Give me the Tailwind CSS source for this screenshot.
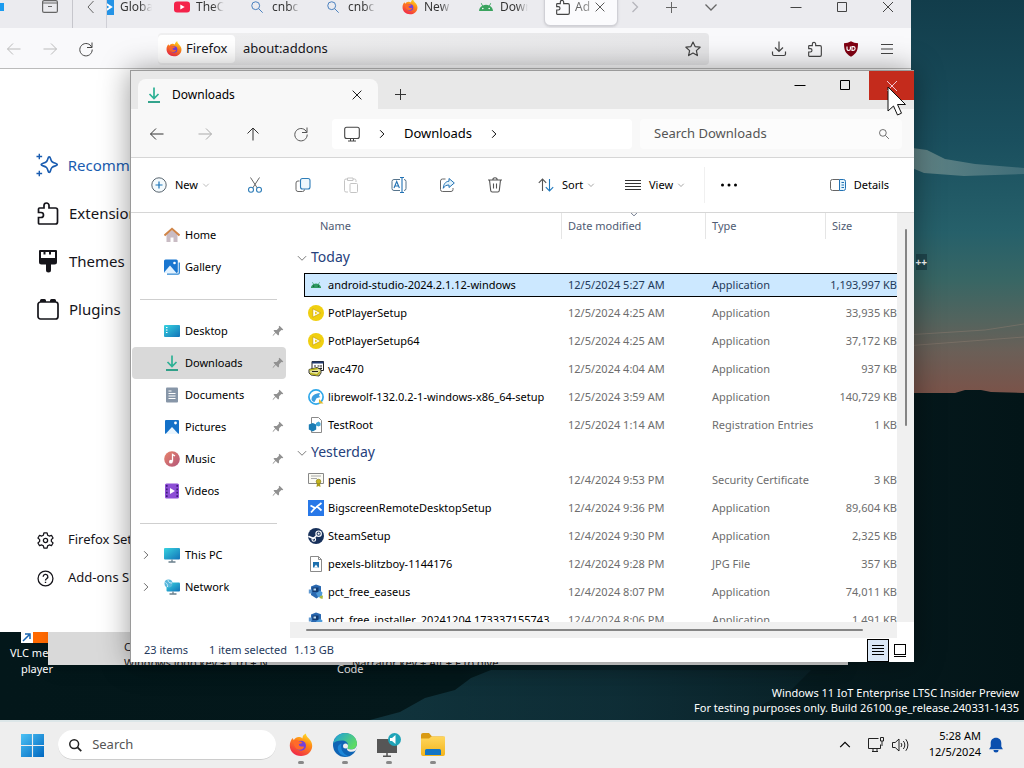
<!DOCTYPE html>
<html lang="en">
<head>
  <meta charset="utf-8">
  <meta name="viewport" content="width=device-width, initial-scale=1">
  <title>Downloads</title>
  <script src="https://cdn.jsdelivr.net/npm/@tailwindcss/browser@4"></script>
</head>
<body class="h-screen flex flex-col overflow-hidden bg-[#03171b] font-['Noto_Sans','Open_Sans',sans-serif] text-[11px] text-black">

  <!-- icon sprite, kept in the page so its gradients resolve -->
  <svg class="absolute w-0 h-0" aria-hidden="true" xmlns="http://www.w3.org/2000/svg">
    <defs>
      <linearGradient id="g-fox" x1="0.8" y1="0" x2="0.3" y2="1"><stop offset="0" stop-color="#ffe226"/><stop offset=".4" stop-color="#ff8a16"/><stop offset="1" stop-color="#f0254b"/></linearGradient>
      <linearGradient id="g-win" x1="0" y1="0" x2="1" y2="1"><stop offset="0" stop-color="#4cc2f5"/><stop offset="1" stop-color="#0067c0"/></linearGradient>
      <linearGradient id="g-teal" x1="0" y1="0" x2="1" y2="1"><stop offset="0" stop-color="#37d3e0"/><stop offset="1" stop-color="#1272b8"/></linearGradient>
      <linearGradient id="g-edge" x1="0" y1="0" x2="1" y2="0.6"><stop offset="0" stop-color="#1b9de2"/><stop offset="1" stop-color="#5fdc62"/></linearGradient>
      <linearGradient id="g-music" x1="0" y1="0" x2="1" y2="1"><stop offset="0" stop-color="#e8836a"/><stop offset="1" stop-color="#b2567a"/></linearGradient>
      <linearGradient id="g-folder" x1="0" y1="0" x2="0" y2="1"><stop offset="0" stop-color="#ffd65c"/><stop offset="1" stop-color="#f3b41c"/></linearGradient>
    </defs>
    <symbol id="left" viewBox="0 0 16 16"><path d="M14.500 8h-13M7 2.500L1.500 8 7 13.500" fill="none" stroke="currentColor"/></symbol>
    <symbol id="right" viewBox="0 0 16 16"><path d="M1.500 8h13M9 2.500L14.500 8 9 13.500" fill="none" stroke="currentColor"/></symbol>
    <symbol id="up" viewBox="0 0 16 16"><path d="M8 14.500V2M2.500 7.500L8 2l5.500 5.500" fill="none" stroke="currentColor"/></symbol>
    <symbol id="reload" viewBox="0 0 16 16"><path d="M13.800 6.500A6.200 6.200 0 1 0 14.200 8.500M14 1.500v5H9" fill="none" stroke="currentColor"/></symbol>
    <symbol id="chev-r" viewBox="0 0 16 16"><path d="M5.500 3l5 5-5 5" fill="none" stroke="currentColor" stroke-width="1.300"/></symbol>
    <symbol id="chev-l" viewBox="0 0 16 16"><path d="M10.500 2l-5.500 6 5.500 6" fill="none" stroke="currentColor"/></symbol>
    <symbol id="chev-d" viewBox="0 0 16 16"><path d="M2.500 5.500L8 11l5.500-5.500" fill="none" stroke="currentColor" stroke-width="1.300"/></symbol>
    <symbol id="chev-u" viewBox="0 0 16 16"><path d="M2.500 10.500L8 5l5.500 5.500" fill="none" stroke="currentColor" stroke-width="1.400"/></symbol>
    <symbol id="close" viewBox="0 0 16 16"><path d="M3 3l10 10M13 3L3 13" fill="none" stroke="currentColor"/></symbol>
    <symbol id="plus" viewBox="0 0 16 16"><path d="M8.500 3v11M3 8.500h11" fill="none" stroke="currentColor"/></symbol>
    <symbol id="min" viewBox="0 0 16 16"><path d="M2.500 8.500h11" fill="none" stroke="currentColor"/></symbol>
    <symbol id="max" viewBox="0 0 16 16"><path d="M3.500 3.500h9v9h-9z" fill="none" stroke="currentColor"/></symbol>
    <symbol id="search" viewBox="0 0 16 16"><circle cx="6.500" cy="6.500" r="4.500" fill="none" stroke="currentColor"/><path d="M10 10l4.500 4.500" stroke="currentColor"/></symbol>
    <symbol id="find" viewBox="0 0 16 16"><circle cx="7" cy="7" r="5" fill="none" stroke="#222" stroke-width="1.700"/><path d="M10.800 10.800l4.200 4.200" stroke="#222" stroke-width="2"/></symbol>
    <symbol id="puzzle" viewBox="0 0 24 24"><path d="M2.500 22V16.500H5a2 2 0 0 0 0-5H2.500V8a1 1 0 0 1 1-1H8V4.500a2.500 2.500 0 0 1 5 0V7h6.500a2 2 0 0 1 2 2v12a2 2 0 0 1-2 2h-16a1 1 0 0 1-1-1z" fill="none" stroke="currentColor" stroke-width="1.700"/></symbol>
    <symbol id="archive" viewBox="0 0 16 16"><rect x=".6" y="1.600" width="14.800" height="11.800" rx="1.500" fill="none" stroke="currentColor" stroke-width="1.200"/><path d="M1 4h14M6 7.500h4" stroke="currentColor" stroke-width="1.200"/></symbol>
    <symbol id="fox" viewBox="0 0 24 24">
      <path d="M12 23C5.500 23 .8 18.500.8 12.500c0-3 1-5.500 3-7.500.2 1 .6 1.700 1 2C6 5 8 4 9.500 4c1.500-.2 3 .4 4 1.400C13.300 3.500 14.500 1.500 17 .5c-.2 2 1 3 2.800 5 2.200 2.300 3.500 4.500 3.400 7.500-.2 6-5 10-11.200 10z" fill="url(#g-fox)"/>
      <circle cx="12" cy="12.800" r="5" fill="#7440d8"/>
      <path d="M4.500 8c2-1.500 4.500-1 5.500.5 1.500-.3 3 .3 3.500 1.500-1.500 0-2 .8-3.500 1-.5 1.500 1 3 3 2.500 1.500-.3 2.200 0 2.200.5-1 2.500-5 4-8 1.500C5 13.500 4.500 10.500 4.500 8z" fill="#ff6a2a"/>
    </symbol>
    <symbol id="yt" viewBox="0 0 16 16"><rect y="2.500" width="16" height="11" rx="3" fill="#f4234a"/><path d="M6.300 5.500l4.400 2.500-4.400 2.500z" fill="#fff"/></symbol>
    <symbol id="android" viewBox="0 0 16 16"><path d="M1 12c.2-2.400 1.500-4.200 3.200-5.200L2.800 4.400l.6-.4 1.500 2.500a7.500 7.500 0 0 1 6.200 0L12.600 4l.6.400-1.400 2.400C13.500 7.800 14.800 9.600 15 12z" fill="#3aa35e"/><circle cx="4.800" cy="9.500" r=".8" fill="#fff"/><circle cx="11.200" cy="9.500" r=".8" fill="#fff"/></symbol>
    <symbol id="android-sm" viewBox="-3 -3 22 22"><path d="M1 12c.2-2.400 1.500-4.200 3.200-5.200L2.800 4.400l.6-.4 1.500 2.500a7.500 7.500 0 0 1 6.200 0L12.600 4l.6.400-1.400 2.400C13.500 7.800 14.800 9.600 15 12z" fill="#2f9a62"/><circle cx="4.800" cy="9.500" r=".8" fill="#0b3a26"/><circle cx="11.200" cy="9.500" r=".8" fill="#0b3a26"/></symbol>
    <symbol id="star" viewBox="0 0 16 16"><path d="M8 1l2.100 4.600 5 .6-3.700 3.400 1 5L8 12.100l-4.400 2.500 1-5L.9 6.200l5-.6z" fill="none" stroke="currentColor" stroke-width="1.200" stroke-linejoin="round"/></symbol>
    <symbol id="save" viewBox="0 0 16 16"><path d="M8 .5v9.500M4 6.500l4 4 4-4M1.500 10.500v2.500a1.500 1.500 0 0 0 1.500 1.500h10a1.500 1.500 0 0 0 1.500-1.500v-2.500" fill="none" stroke="currentColor" stroke-width="1.200"/></symbol>
    <symbol id="shield" viewBox="0 0 16 16"><path d="M8 .3c2 1.300 4.500 1.900 7 1.900 0 6.500-1 10-7 13.500C2 12.200 1 8.700 1 2.200c2.500 0 5-.6 7-1.900z" fill="#800012"/><path d="M4 5.500v2.300a1.500 1.500 0 0 0 3.400 0V5.500M9 5.700v3.600h1.300a1.800 1.800 0 0 0 0-3.600z" fill="none" stroke="#fff" stroke-width="1.200"/></symbol>
    <symbol id="menu" viewBox="0 0 16 16"><path d="M2 3.500h12M2 8h12M2 12.500h12" stroke="currentColor" stroke-width="1.200"/></symbol>
    <symbol id="sparkle" viewBox="0 0 24 24"><path d="M14 3.500c.8 0 1 .4 1.300 1.500.9 3.300 1.600 4.200 5.200 5.200 2.700.8 2.700 1.900 0 2.700-3.600 1-4.300 1.900-5.200 5.200-.6 2.400-2 2.400-2.600 0-.9-3.300-1.600-4.200-5.200-5.200-2.700-.8-2.700-1.900 0-2.700 3.600-1 4.300-1.900 5.200-5.200.3-1.100.5-1.500 1.300-1.500z" fill="none" stroke="currentColor" stroke-width="1.800"/><path d="M3.500 0v6M.5 3h6M3.500 18v6M.5 21h6" stroke="currentColor" stroke-width="1.500"/></symbol>
    <symbol id="brush" viewBox="0 0 24 24"><path d="M4 1h16a1 1 0 0 1 1 1v11a2.500 2.500 0 0 1-2.500 2.500H15V21a2.500 2.500 0 0 1-5 0v-5.500H5.500A2.500 2.500 0 0 1 3 13V2a1 1 0 0 1 1-1z" fill="currentColor"/><path d="M5 3h2.500v2.500H9.500V3h3.500v2.500h2V3h4v6H5z" fill="#fff"/></symbol>
    <symbol id="plugin" viewBox="0 0 24 24"><rect x="2" y="5" width="20" height="17" rx="2.500" fill="none" stroke="currentColor" stroke-width="1.700"/><path d="M4 5V3.500A1.500 1.500 0 0 1 5.500 2h3A1.500 1.500 0 0 1 10 3.500V5zM14 5V3.500A1.500 1.500 0 0 1 15.500 2h3A1.500 1.500 0 0 1 20 3.500V5z" fill="currentColor"/></symbol>
    <symbol id="gear" viewBox="0 0 16 16"><path d="M6.500.8h3l.5 2.200 1.500.8 2.100-.7 1.500 2.600-1.600 1.500v1.600l1.600 1.500-1.500 2.600-2.100-.7-1.500.8-.5 2.200h-3L6 13l-1.500-.8-2.100.7L.9 10.300l1.600-1.500V7.200L.9 5.700l1.500-2.600 2.100.7L6 3z" fill="none" stroke="currentColor" stroke-width="1.200" stroke-linejoin="round"/><circle cx="8" cy="8" r="2" fill="none" stroke="currentColor" stroke-width="1.200"/></symbol>
    <symbol id="help" viewBox="0 0 16 16"><circle cx="8" cy="8" r="7" fill="none" stroke="currentColor" stroke-width="1.200"/><path d="M5.800 6.300a2.200 2.200 0 1 1 3.300 1.900c-.8.500-1.100.8-1.100 1.600M8 11v1.300" fill="none" stroke="currentColor" stroke-width="1.300"/></symbol>
    <symbol id="down" viewBox="0 0 16 16"><path d="M8 .5v11M3.500 7L8 11.500 12.500 7" fill="none" stroke="#2db195" stroke-width="1.700"/><path d="M2 15h12" stroke="#1d9a80" stroke-width="1.800"/></symbol>
    <symbol id="monitor" viewBox="0 0 16 16"><rect x=".7" y="1.200" width="14.600" height="11.300" rx="2" fill="none" stroke="currentColor" stroke-width="1.100"/><path d="M4 15h8M6.500 12.500V15M9.500 12.500V15" stroke="currentColor"/></symbol>
    <symbol id="new" viewBox="0 0 16 16"><circle cx="8" cy="8" r="7.200" fill="#f4fafd" stroke="#5a6670"/><path d="M8 4.500v7M4.500 8h7" stroke="#1b74b8" stroke-width="1.200"/></symbol>
    <symbol id="cut" viewBox="0 0 16 16"><path d="M3.500.5l6.800 10.500M12.500.5L5.700 11" stroke="#666" fill="none"/><circle cx="4" cy="12.800" r="2.500" fill="none" stroke="#2e7db8" stroke-width="1.100"/><circle cx="12" cy="12.800" r="2.500" fill="none" stroke="#2e7db8" stroke-width="1.100"/></symbol>
    <symbol id="copy" viewBox="0 0 16 16"><path d="M4.500 4H3a2 2 0 0 0-2 2v6.500a2 2 0 0 0 2 2h4.500a2 2 0 0 0 2-2" fill="none" stroke="#666"/><rect x="5.500" y="1.500" width="9.500" height="10.500" rx="2" fill="#eef8fd" stroke="#2e7db8" stroke-width="1.100"/></symbol>
    <symbol id="paste" viewBox="0 0 16 16"><path d="M5 15H3a1.500 1.500 0 0 1-1.500-1.500v-10A1.500 1.500 0 0 1 3 2h1.500M10 2h1.500A1.500 1.500 0 0 1 13 3.500V5M4.500 1h5.500v2.500H4.500z" fill="none" stroke="#c4c4c4"/><rect x="7" y="6.500" width="7.500" height="9" rx="1" fill="none" stroke="#c4c4c4"/></symbol>
    <symbol id="rename" viewBox="0 0 16 16"><path d="M9 2.500H3a2 2 0 0 0-2 2v7a2 2 0 0 0 2 2h6M13 2.500a2 2 0 0 1 2 2v7a2 2 0 0 1-2 2" fill="none" stroke="#56748c"/><path d="M9 .5h4M11 .5v15M9 15.500h4M3 11l2.700-6.500L8.400 11M4 9h3.500" fill="none" stroke="#2272b4" stroke-width="1.100"/></symbol>
    <symbol id="share" viewBox="0 0 16 16"><path d="M6.500 2H3.500a2 2 0 0 0-2 2v8.500a2 2 0 0 0 2 2H12a2 2 0 0 0 2-2V11" fill="none" stroke="#666"/><path d="M10 1.500L15.300 6 10 10.500V8C7 8 5.500 9.200 4.300 11.300 4.500 7.500 6.200 4.500 10 4.200z" fill="#e4f3fb" stroke="#2272b4" stroke-linejoin="round"/></symbol>
    <symbol id="trash" viewBox="0 0 16 16"><path d="M1 3h14M5.800 3a2.200 2.200 0 0 1 4.400 0M2.500 3l1.200 10.500A1.700 1.700 0 0 0 5.300 15h5.400a1.700 1.700 0 0 0 1.600-1.500L13.500 3M6.500 6.500v5M9.500 6.500v5" fill="none" stroke="#555" stroke-width="1.100"/></symbol>
    <symbol id="sort" viewBox="0 0 16 16"><path d="M4.500 14V2M.8 5.800L4.500 2l3.700 3.800" fill="none" stroke="#555" stroke-width="1.100"/><path d="M11.500 2v12M7.800 10.200l3.700 3.800 3.700-3.800" fill="none" stroke="#1e78bd" stroke-width="1.100"/></symbol>
    <symbol id="lines" viewBox="0 0 16 16"><path d="M0 3.500h16M0 6.500h16M0 9.500h16M0 12.500h16" stroke="#333"/></symbol>
    <symbol id="list" viewBox="0 0 12 12"><path d="M0 1.500h12M0 4.500h12M0 7.500h12M0 10.500h12" stroke="#000"/></symbol>
    <symbol id="dots" viewBox="0 0 16 16"><circle cx="1.500" cy="8" r="1.500"/><circle cx="8" cy="8" r="1.500"/><circle cx="14.500" cy="8" r="1.500"/></symbol>
    <symbol id="details" viewBox="0 0 16 16"><path d="M9.500 2.500H2.500a2 2 0 0 0-2 2v7a2 2 0 0 0 2 2h7" fill="none" stroke="#666"/><path d="M9.500 2.500h4a2 2 0 0 1 2 2v7a2 2 0 0 1-2 2h-4zM11.500 5.500h2.500M11.500 8h2.500M11.500 10.500h2.500" fill="#e5f4fc" stroke="#2272b4"/></symbol>
    <symbol id="home" viewBox="0 0 16 16"><path d="M2.500 7.500L8 3l5.500 4.500V15h-4v-4.500h-3V15h-4z" fill="#c9bcc4"/><path d="M.5 8.500L8 1.800l7.500 6.700" fill="none" stroke="#d08548" stroke-width="2"/></symbol>
    <symbol id="gallery" viewBox="0 0 16 16"><path d="M3 15.200h11A1.300 1.300 0 0 0 15.300 14V3.500" fill="none" stroke="#2c86d4" stroke-width="1.300"/><rect x="0" y=".5" width="13.800" height="13.500" rx="1.500" fill="#1976d0"/><path d="M0 13.500L6 6.500l6.500 7.500H1z" fill="#e4f3ff"/><circle cx="10.500" cy="4" r="1.300" fill="#fff"/></symbol>
    <symbol id="desktop" viewBox="0 0 16 16"><rect y="2" width="16" height="12" rx="1" fill="url(#g-teal)"/><path d="M2 4.500h1.500M2 7h1.500M2 9.500h1.500" stroke="#fff"/></symbol>
    <symbol id="docs" viewBox="0 0 16 16"><rect x="2" y=".5" width="12" height="15" rx="1" fill="#8796a8"/><path d="M4.500 4h3M4.500 6.500h7M4.500 9h7M4.500 11.500h7" stroke="#fff"/></symbol>
    <symbol id="pics" viewBox="0 0 16 16"><rect x="1" y="1" width="14" height="14" rx="1" fill="#1370c8"/><path d="M1.500 15L8 8l6.500 7z" fill="#eaf6ff"/><circle cx="11.500" cy="4" r="1.400" fill="#fff"/></symbol>
    <symbol id="music" viewBox="0 0 16 16"><circle cx="8" cy="8" r="7.800" fill="url(#g-music)"/><path d="M8.500 10.500V3.500l2.500 1.500" fill="none" stroke="#fff" stroke-width="1.300"/><circle cx="6.900" cy="10.700" r="1.900" fill="#fff"/></symbol>
    <symbol id="videos" viewBox="0 0 16 16"><rect x="1" y=".5" width="14" height="15" rx="1.500" fill="#8d4fd6"/><path d="M2.800 2v12M13.200 2v12" stroke="#3d1c78" stroke-width="1.600" stroke-dasharray="1.800 1.600"/><path d="M6 5l5 3-5 3z" fill="#fff"/></symbol>
    <symbol id="pc" viewBox="0 0 16 16"><rect y="1" width="16" height="11.500" rx="1" fill="url(#g-teal)"/><path d="M8 12.500v2M4.500 15h7" stroke="#6a7f8c" stroke-width="1.300"/></symbol>
    <symbol id="network" viewBox="0 0 16 16"><rect x="2.500" y="3.500" width="13.500" height="9" rx="1" fill="url(#g-teal)"/><circle cx="4.500" cy="4.500" r="4" fill="#58b7dc"/><path d="M1.500 3.500c1.500 1 2.500 2.500 2 4.500M4 1c0 2 1.500 3 4 3" fill="none" stroke="#cdeefa"/><path d="M9 12.500v2M5.500 15h7" stroke="#6a7f8c" stroke-width="1.300"/></symbol>
    <symbol id="pin" viewBox="0 0 16 16"><path d="M10 1l5 5-1 1-1.500-.3L9.500 9.700 9.300 13l-1.100 1L5 10.800 1 15l.2-1.700L4.300 10 2 7.800l1-1.100 3.300-.2L9.300 3.500 9 2z" fill="#919191"/></symbol>
    <symbol id="pot" viewBox="0 0 16 16"><circle cx="8" cy="8" r="8" fill="#f0cf10"/><path d="M4.800 3.800l8 4.200-8 4.200z" fill="#fff" stroke="#c79c05" stroke-width=".7"/><path d="M7 6.500l2.800 1.500L7 9.500z" fill="#f0cf10"/></symbol>
    <symbol id="vac" viewBox="0 0 16 16"><path d="M4 .5h11.500v9H4z" fill="#fff" stroke="#222"/><path d="M4 1.500h11.500" stroke="#223a70" stroke-width="2"/><path d="M6 5h2M9.500 5h2M13 4v2.500M6 7.500h8" stroke="#222"/><path d="M1 8.500l8-2 4 2v3.500l-2 3-8-1-2-2z" fill="#e2e096" stroke="#222" stroke-width=".9"/><path d="M1.500 9l8-1.500M2 12.500l7 1.500 3-3" stroke="#b8b21c" stroke-width="1.500" fill="none"/><path d="M4 10.500h6" stroke="#222"/></symbol>
    <symbol id="wolf" viewBox="0 0 16 16"><circle cx="8" cy="8" r="7.100" fill="#fff" stroke="#2fa8ea" stroke-width="1.700"/><path d="M3.500 10.500c.3-4 3-6 8.500-6.500l-1 3 1.500 1-4 1.200L6.500 13c-1.500-.3-2.500-1-3-2.500z" fill="#3c9ee0"/><path d="M11 10l4.500 4.500H11z" fill="#e0b92c"/></symbol>
    <symbol id="reg" viewBox="0 0 16 16"><path d="M3.500.5h7l3 3v12h-10z" fill="#fff" stroke="#8a8a8a"/><path d="M.8 7.500l4-1.500 3.400 1.500v5L4.700 14.500.8 12.500z" fill="#1b7cb4"/><path d="M8 6l2.500-1.500 2 1.500v2.500l-2 1L8 8.500z" fill="#3fa4d4"/></symbol>
    <symbol id="cert" viewBox="0 0 16 16"><path d="M.5 1.500h15v10H.5z" fill="#fbfbf4" stroke="#888"/><path d="M3 4h10M3 6.500h6" stroke="#aaa"/><circle cx="10.500" cy="9.500" r="2.300" fill="#c4b41c" stroke="#7c7310" stroke-width=".6"/><path d="M9 11.500l-.5 3.500 2-1 2 1-.5-3.500z" fill="#a89a14"/></symbol>
    <symbol id="bigscreen" viewBox="0 0 16 16"><path d="M0 0h16v16H0z" fill="#2878e8"/><path d="M2.500 5.500l4.500 2.500-4 4.500M13.500 3L9 6.500l4.500 4" fill="none" stroke="#fff" stroke-width="1.800"/><path d="M6.500 8.500L9.500 6.500" stroke="#fff" stroke-width="1.500"/></symbol>
    <symbol id="steam" viewBox="0 0 16 16"><circle cx="8" cy="8" r="8" fill="#17305a"/><circle cx="10.600" cy="5.700" r="2.700" fill="none" stroke="#fff" stroke-width="1.200"/><circle cx="10.600" cy="5.700" r="1.100" fill="#fff"/><path d="M.3 8.200l5.200 2.300 3-3" fill="none" stroke="#fff" stroke-width="1.500"/><circle cx="5.800" cy="11.500" r="1.800" fill="none" stroke="#fff" stroke-width="1.100"/></symbol>
    <symbol id="jpg" viewBox="0 0 16 16"><path d="M2.500.5h8l3 3v12h-11z" fill="#fff" stroke="#8a8a8a"/><path d="M10.500.5v3h3" fill="none" stroke="#8a8a8a"/><path d="M5 6h6v5.500H5z" fill="#1b6fae"/><path d="M6 11.500l2-3 2 3z" fill="#fff"/></symbol>
    <symbol id="pct" viewBox="0 0 16 16"><path d="M3 2.500L8 .5l5 1.700v9L8.500 14.500 3 11z" fill="#2a68b0"/><path d="M4.500 3.500h6v4.500h-6z" fill="#123a70"/><path d="M5.500 4.500H8v2H5.500z" fill="#bcdcf4"/><path d="M.8 5.500h3v4h-3z" fill="#5f98d0"/><path d="M8 9.500l4-3 2.500 2-1 5-3.500-.5z" fill="#4d9ad8"/><path d="M12 12l3-.5-.5 3.500-3-1z" fill="#a9b840"/></symbol>
    <symbol id="start" viewBox="0 0 24 24"><path d="M0 0h11.400v11.400H0zM12.600 0H24v11.400H12.600zM0 12.600h11.400V24H0zM12.600 12.600H24V24H12.600z" fill="url(#g-win)"/></symbol>
    <symbol id="edge" viewBox="0 0 24 24"><circle cx="12" cy="12" r="12" fill="#0f64b4"/><path d="M.3 10.500C1.500 4 6.500 0 12 0c6.800 0 12 4.800 12 10.500 0 3.500-2.800 6-6 6-2.500 0-4-1-4-1.800 0-.6 1-1 1-2.700 0-2.500-2.500-4.500-6-4.500-4 0-7.500 1-8.700 3z" fill="url(#g-edge)"/><path d="M14 14.500c-.8 2 1 4.300 4.500 4.300 1.500 0 3-.4 4.200-1.200l1.300-2.600V12c-.8 3-3.200 4.500-6 4.500-2.500 0-4-1-4-2z" fill="#eee"/><path d="M8.500 10.500c-1.500 5 1.500 10.500 6.500 12.500-5 1-10-2.500-10.300-8 0-2 1.500-4 3.800-4.500z" fill="#1b86d8"/><circle cx="12.500" cy="13" r="2.500" fill="#eee"/></symbol>
    <symbol id="speaker-pc" viewBox="0 0 24 24"><path d="M0 6h20v14H0z" fill="#565656"/><path d="M10 20v3M6 23.300h8" stroke="#565656" stroke-width="1.500"/><circle cx="17.500" cy="6.500" r="6.500" fill="#20a4b8"/><path d="M13 5h2l3.500-3v9L15 8h-2z" fill="#fff"/></symbol>
    <symbol id="folder" viewBox="0 0 24 24"><path d="M0 2a2 2 0 0 1 2-2h6l3 3.500h11a2 2 0 0 1 2 2V8H0z" fill="#d99a14"/><path d="M0 5.500h8l2.500-2H24V21a2 2 0 0 1-2 2H2a2 2 0 0 1-2-2z" fill="url(#g-folder)"/><path d="M5.500 16h13a1.500 1.500 0 0 1 1.500 1.500V22H4v-4.500A1.500 1.500 0 0 1 5.500 16z" fill="#1475c4"/></symbol>
    <symbol id="net" viewBox="0 0 16 16"><path d="M10.500 1.500h-10v10h12V7.500M4 14.500h6M5 11.500v3M9 11.500v3M12.500.5h3v3.500h-3zM14 4v5" fill="none" stroke="#222"/></symbol>
    <symbol id="sound" viewBox="0 0 18 16"><path d="M.5 5.500h2.700L7 2v12l-3.800-3.500H.5zM9 6a3 3 0 0 1 0 4M11.300 4a6 6 0 0 1 0 8M13.800 2.200a9 9 0 0 1 0 11.600" fill="none" stroke="#222"/></symbol>
    <symbol id="bell" viewBox="0 0 16 16"><path d="M8 .8c3.300 0 5.300 2.400 5.300 5.300v3.400l1.600 2.700H1.100l1.600-2.700V6.100C2.700 3.200 4.700.8 8 .8zM5.500 13h5a2.500 2.500 0 0 1-5 0z" fill="#0b4fae"/></symbol>
  </svg>

  <main class="relative flex-1 overflow-hidden">
    <!-- wallpaper -->
    <svg class="absolute inset-0 w-full h-full" viewBox="0 0 1024 720" preserveAspectRatio="none">
      <defs>
        <linearGradient id="sky" gradientUnits="userSpaceOnUse" x1="0" y1="0" x2="0" y2="400">
          <stop offset="0" stop-color="#123d4b"/><stop offset=".35" stop-color="#1a4f5e"/><stop offset=".58" stop-color="#26606a"/>
          <stop offset=".7" stop-color="#386664"/><stop offset=".8" stop-color="#53645e"/><stop offset=".88" stop-color="#6b5f57"/><stop offset="1" stop-color="#7d5147"/>
        </linearGradient>
        <linearGradient id="cloud" x1="0" y1="0" x2="1" y2="0"><stop offset="0" stop-color="#7b9693"/><stop offset="1" stop-color="#4c7680"/></linearGradient>
        <linearGradient id="lake" x1="0" y1="0" x2="1" y2="0"><stop offset="0" stop-color="#03171a"/><stop offset=".45" stop-color="#04181b"/><stop offset=".6" stop-color="#0b252c"/><stop offset=".8" stop-color="#061a1e"/><stop offset="1" stop-color="#031518"/></linearGradient>
        <linearGradient id="ripple" x1="0" y1="0" x2="1" y2="0"><stop offset="0" stop-color="#16404c"/><stop offset="1" stop-color="#0b252c"/></linearGradient>
      </defs>
      <path d="M0 0h1024v395H0z" fill="url(#sky)"/>
      <path d="M905 147l22 3 18 9 30 5 49 4v6l-60 2-40-3-19-8z" fill="url(#cloud)" opacity=".75"/>
      <path d="M905 335l80-5 39-6M905 346l119-9" fill="none" stroke="#8c7c70" opacity=".5"/>
      <path d="M0 393h900l55 0 10-3 16 0 10 2 33 1v328H0z" fill="url(#lake)"/>
      <path d="M370 720l30-8 25-14 30-8 16-12 20-8h320l-20 20-30 15-10 15z" fill="url(#ripple)" opacity=".7"/>
    </svg>
    <span class="absolute right-[97px] top-[254px] text-[10px] font-bold text-white bg-[#16343c]/60 leading-4">++</span>

    <!-- desktop shortcuts -->
    <div class="absolute left-[7px] bottom-[43px] w-[60px] flex flex-col items-center text-[11px] leading-4 text-white text-center">
      <div class="flex items-end w-8 h-6 mb-0.5 bg-orange-500"><svg class="w-3 h-3 bg-white" viewBox="0 0 12 12"><path d="M2 10l6-6M4 3h5v5" fill="none" stroke="#1763b0" stroke-width="1.500"/></svg></div>
      VLC media player
    </div>
    <span class="absolute left-[337px] bottom-[43px] leading-4 text-white">Code</span>

    <!-- window at the back -->
    <div class="absolute left-[48px] right-[176px] bottom-[55px] h-20 overflow-hidden bg-[#d9d9d9] shadow-lg flex items-end pl-[76px] text-[#222]">
      <span class="w-[228px] -mb-1.5 leading-4 whitespace-nowrap">Ctrl<br>Windows logo key + Ctrl + N</span>
      <span class="-mb-1.5 leading-4">Narrator key + Alt + F to give</span>
    </div>

    <!-- Firefox -->
    <section class="absolute left-0 top-0 right-[113px] bottom-[88px] flex flex-col bg-white overflow-hidden text-[#15141a]">
      <div class="flex items-center h-7 pb-3.5 bg-[#ebebef] text-[12px] text-[#444] shrink-0">
        <span class="w-1 h-2 bg-[#1b9bef]"></span>
        <svg class="w-4 h-4 ml-[38px] text-[#666]"><use href="#archive"/></svg>
        <span class="w-px h-7 ml-3.5 mt-3.5 bg-[#c6c6cc]"></span>
        <svg class="w-4 h-4 ml-[10px] mr-[7px] text-[#666]"><use href="#chev-l"/></svg>
        <div class="flex justify-end w-[438px] h-7 mt-3.5 pb-3.5 items-center border-l border-[#cfcfd6] overflow-hidden">
          <a href="#" class="flex items-center gap-1.5 w-[76px] h-7 shrink-0 pl-0.5 overflow-hidden"><svg class="w-4 h-4 shrink-0" viewBox="0 0 16 16"><path d="M0 0h16v16H0z" fill="#2493e6"/><path d="M7 4l6 4-6 4" fill="none" stroke="#fff" stroke-width="2"/></svg><span class="w-8 overflow-hidden whitespace-nowrap bg-linear-to-r from-[#333] from-60% to-transparent bg-clip-text text-transparent">Global</span></a>
          <a href="#" class="flex items-center gap-1.5 w-[76px] h-7 shrink-0 pl-0.5 overflow-hidden"><svg class="w-4 h-4 shrink-0"><use href="#yt"/></svg><span class="w-7 overflow-hidden whitespace-nowrap bg-linear-to-r from-[#333] from-60% to-transparent bg-clip-text text-transparent">TheC</span></a>
          <a href="#" class="flex items-center gap-1.5 w-[76px] h-7 shrink-0 pl-0.5 overflow-hidden"><svg class="w-3.5 h-3.5 mr-0.5 shrink-0 text-[#3572b8]"><use href="#search"/></svg><span class="w-7 overflow-hidden whitespace-nowrap bg-linear-to-r from-[#333] from-60% to-transparent bg-clip-text text-transparent">cnbc</span></a>
          <a href="#" class="flex items-center gap-1.5 w-[76px] h-7 shrink-0 pl-0.5 overflow-hidden"><svg class="w-3.5 h-3.5 mr-0.5 shrink-0 text-[#3572b8]"><use href="#search"/></svg><span class="w-7 overflow-hidden whitespace-nowrap bg-linear-to-r from-[#333] from-60% to-transparent bg-clip-text text-transparent">cnbc</span></a>
          <a href="#" class="flex items-center gap-1.5 w-[76px] h-7 shrink-0 pl-0.5 overflow-hidden"><svg class="w-4 h-4 shrink-0"><use href="#fox"/></svg><span class="w-7 overflow-hidden whitespace-nowrap bg-linear-to-r from-[#333] from-60% to-transparent bg-clip-text text-transparent">New</span></a>
          <a href="#" class="flex items-center gap-1.5 w-[68px] h-7 shrink-0 pl-0.5 overflow-hidden"><svg class="w-4 h-4 shrink-0"><use href="#android"/></svg><span class="w-7 overflow-hidden whitespace-nowrap bg-linear-to-r from-[#333] from-60% to-transparent bg-clip-text text-transparent">Down</span></a>
        </div>
        <a href="#" class="flex items-center w-[74px] h-9 pl-2.5 pb-0.5 mt-0.5 shrink-0 rounded-md bg-[#fbfbfd] border border-[#d0d0d6] shadow">
          <svg class="w-4 h-4"><use href="#puzzle"/></svg><span class="ml-1 w-4 overflow-hidden bg-linear-to-r from-[#555] to-[#aaa] bg-clip-text text-transparent">Ad</span><svg class="w-3.5 h-3.5 ml-0.5"><use href="#close"/></svg>
        </a>
        <svg class="w-4 h-4 ml-[9px] text-[#b5b5bb]"><use href="#chev-r"/></svg>
        <button class="ml-5" aria-label="New tab"><svg class="w-4 h-4 text-[#666]"><use href="#plus"/></svg></button>
        <button class="ml-6" aria-label="List all tabs"><svg class="w-4 h-4 text-[#666]"><use href="#chev-d"/></svg></button>
        <button class="ml-auto" aria-label="Minimize"><svg class="w-4 h-4"><use href="#min"/></svg></button>
        <button class="ml-[30px]" aria-label="Maximize"><svg class="w-4 h-4"><use href="#max"/></svg></button>
        <button class="ml-[30px] mr-[15px]" aria-label="Close"><svg class="w-4 h-4"><use href="#close"/></svg></button>
      </div>
      <div class="flex items-center h-[41px] shrink-0 px-1.5 pt-0.5 bg-[#f9f9fb] border-b border-[#bbb] text-[#444]">
        <button class="w-9" aria-label="Back"><svg class="w-4 h-4 text-[#bbb]"><use href="#left"/></svg></button>
        <button class="w-9" aria-label="Forward"><svg class="w-4 h-4 text-[#bbb]"><use href="#right"/></svg></button>
        <button class="w-9" aria-label="Reload"><svg class="w-4 h-4"><use href="#reload"/></svg></button>
        <div class="flex items-center flex-1 h-8 ml-[44px] pr-2 rounded-sm bg-linear-to-r from-[#efeff0] to-[#e6e6e8] text-[13px] text-[#15141a]">
          <span class="flex items-center gap-1 h-7 w-[77px] pl-2 rounded-sm bg-white"><svg class="w-4 h-4 shrink-0"><use href="#fox"/></svg>Firefox</span>
          <input class="flex-1 min-w-0 ml-2 outline-none" aria-label="Address" value="about:addons">
          <svg class="w-4 h-4 text-[#444]"><use href="#star"/></svg>
        </div>
        <button class="ml-[62px]" aria-label="Downloads"><svg class="w-4 h-4"><use href="#save"/></svg></button>
        <button class="ml-5" aria-label="Extensions"><svg class="w-4 h-4"><use href="#puzzle"/></svg></button>
        <button class="ml-5" aria-label="uBlock"><svg class="w-4 h-4"><use href="#shield"/></svg></button>
        <button class="ml-5 mr-2.5" aria-label="Menu"><svg class="w-4 h-4"><use href="#menu"/></svg></button>
      </div>
      <nav class="flex flex-col flex-1 w-[200px] pt-[72px] pb-[35px] pl-9 whitespace-nowrap">
        <a href="#" class="flex items-center gap-[9px] h-12 text-[15px] text-[#1a5cb0]"><svg class="w-6 h-6"><use href="#sparkle"/></svg>Recommendations</a>
        <a href="#" class="flex items-center gap-[9px] h-12 text-[15px]"><svg class="w-6 h-6"><use href="#puzzle"/></svg>Extensions</a>
        <a href="#" class="flex items-center gap-[9px] h-12 text-[15px]"><svg class="w-6 h-6"><use href="#brush"/></svg>Themes</a>
        <a href="#" class="flex items-center gap-[9px] h-12 text-[15px]"><svg class="w-6 h-6"><use href="#plugin"/></svg>Plugins</a>
        <a href="#" class="flex items-center gap-3.5 h-[38px] mt-auto pl-px text-[13px]"><svg class="w-[17px] h-[17px]"><use href="#gear"/></svg>Firefox Settings</a>
        <a href="#" class="flex items-center gap-3.5 h-[38px] pl-px text-[13px]"><svg class="w-[17px] h-[17px]"><use href="#help"/></svg>Add-ons Support</a>
      </nav>
    </section>

    <!-- file explorer -->
    <section class="absolute left-[130px] right-[110px] top-[70px] bottom-[58px] flex flex-col bg-white border-t border-l border-[#9a9a9a] shadow-[0_0_28px_rgba(0,0,0,0.4)]">
      <div class="flex h-[38px] shrink-0 bg-[#e8e8e8]">
        <div class="flex items-center w-60 h-[30px] mt-2 ml-[7px] pt-0.5 pl-2 pr-3.5 rounded-t-lg bg-[#f8f8f8]">
          <svg class="w-4 h-4"><use href="#down"/></svg>
          <span class="ml-2.5 text-[12px]">Downloads</span>
          <button class="ml-auto" aria-label="Close tab"><svg class="w-3.5 h-3.5"><use href="#close"/></svg></button>
        </div>
        <button class="ml-3.5 mt-2" aria-label="New tab"><svg class="w-4 h-4 text-[#333]"><use href="#plus"/></svg></button>
        <button class="flex justify-center w-[45px] h-7 items-center ml-auto" aria-label="Minimize"><svg class="w-4 h-4"><use href="#min"/></svg></button>
        <button class="flex justify-center w-[46px] h-7 items-center" aria-label="Maximize"><svg class="w-4 h-4"><use href="#max"/></svg></button>
        <button class="flex justify-center w-[45px] h-[29px] items-center ml-px bg-[#c42b1c] text-[#f2c6d2]" aria-label="Close"><svg class="w-4 h-4"><use href="#close"/></svg></button>
      </div>
      <div class="flex items-center h-12 shrink-0 pt-0.5 pl-[18px] pr-3 bg-[#f8f8f8] text-[13px]">
        <button class="w-12" aria-label="Back"><svg class="w-4 h-4 text-[#333]"><use href="#left"/></svg></button>
        <button class="w-12" aria-label="Forward"><svg class="w-4 h-4 text-[#aaa]"><use href="#right"/></svg></button>
        <button class="w-12" aria-label="Up"><svg class="w-4 h-4 text-[#333]"><use href="#up"/></svg></button>
        <button class="w-[39px]" aria-label="Refresh"><svg class="w-4 h-4 text-[#555]"><use href="#reload"/></svg></button>
        <div class="flex items-center flex-1 h-[30px] pl-3 rounded bg-white">
          <svg class="w-4 h-4 text-[#444]"><use href="#monitor"/></svg>
          <svg class="w-3 h-3 ml-4"><use href="#chev-r"/></svg>
          <a href="#" class="ml-4">Downloads</a>
          <svg class="w-3 h-3 ml-4"><use href="#chev-r"/></svg>
        </div>
        <label class="flex items-center w-[262px] h-[30px] ml-2 pl-3.5 pr-3 rounded bg-white/60">
          <input class="flex-1 min-w-0 outline-none placeholder:text-[#555]" type="search" placeholder="Search Downloads" aria-label="Search Downloads">
          <svg class="w-3 h-3 text-[#444]"><use href="#search"/></svg>
        </label>
      </div>
      <div class="flex items-center h-[56px] shrink-0 pl-5 pr-[25px] border-y border-[#d6d6d6]">
        <button class="flex items-center w-24"><svg class="w-4 h-4 mr-2"><use href="#new"/></svg>New<svg class="w-2 h-2 ml-1 text-[#999]"><use href="#chev-d"/></svg></button>
        <button class="w-12" aria-label="Cut"><svg class="w-4 h-4"><use href="#cut"/></svg></button>
        <button class="w-12" aria-label="Copy"><svg class="w-4 h-4"><use href="#copy"/></svg></button>
        <button class="w-12" aria-label="Paste"><svg class="w-4 h-4"><use href="#paste"/></svg></button>
        <button class="w-12" aria-label="Rename"><svg class="w-4 h-4"><use href="#rename"/></svg></button>
        <button class="w-12" aria-label="Share"><svg class="w-4 h-4"><use href="#share"/></svg></button>
        <button class="w-[51px]" aria-label="Delete"><svg class="w-4 h-4"><use href="#trash"/></svg></button>
        <button class="flex items-center w-[87px]"><svg class="w-4 h-4 mr-2"><use href="#sort"/></svg>Sort<svg class="w-2 h-2 ml-1 text-[#777]"><use href="#chev-d"/></svg></button>
        <button class="flex items-center w-[79px]"><svg class="w-4 h-4 mr-2"><use href="#lines"/></svg>View<svg class="w-2 h-2 ml-1 text-[#777]"><use href="#chev-d"/></svg></button>
        <button class="h-9 pl-4 border-l border-[#f0f0f0]" aria-label="More"><svg class="w-4 h-4"><use href="#dots"/></svg></button>
        <button class="flex items-center ml-auto"><svg class="w-4 h-4 mr-2"><use href="#details"/></svg>Details</button>
      </div>

      <div class="flex flex-1 min-h-0">
        <nav id="places" class="w-[159px] shrink-0 pt-1.5 pl-px pr-1"></nav>
        <div class="flex flex-col flex-1 min-w-0">
          <div class="flex flex-1 min-h-0">
            <div class="flex-1 min-w-0 overflow-hidden">
              <table class="w-full table-fixed border-collapse">
                <thead>
                  <tr class="h-[31px] text-left align-top text-[#4f5b73]">
                    <th scope="col" class="w-[271px] p-0 pl-[30px] font-normal leading-[26px]">Name</th>
                    <th scope="col" class="w-[144px] p-0 font-normal leading-[26px]"><span class="relative block pl-1.5 border-l border-[#e5e5e5]">Date modified<svg class="absolute left-[67px] -top-1 w-2.5 h-2.5"><use href="#chev-d"/></svg></span></th>
                    <th scope="col" class="w-[120px] p-0 font-normal leading-[26px]"><span class="block pl-1.5 border-l border-[#e5e5e5]">Type</span></th>
                    <th scope="col" class="p-0 font-normal leading-[26px]"><span class="block pl-1.5 border-l border-[#e5e5e5]">Size</span></th>
                  </tr>
                </thead>
                <tbody id="files"></tbody>
              </table>
            </div>
            <div class="w-[17px] pt-4 bg-[#f0f0f0]"><div class="w-0.5 h-[197px] mx-auto rounded bg-[#858585]"></div></div>
          </div>
          <div class="h-4 mr-[17px] flex items-center pl-4 pr-[34px] bg-[#f0f0f0]"><div class="w-full h-0.5 rounded bg-[#858585]"></div></div>
        </div>
      </div>

      <footer class="flex items-center h-6 shrink-0 pl-[13px] pr-1.5 text-[#25395c]">
        <span>23 items</span>
        <span class="ml-[21px]">1 item selected</span>
        <span class="ml-[7px]">1.13 GB</span>
        <button class="flex items-center justify-center w-[22px] h-[23px] ml-auto border border-black bg-[#dbe8f7]" aria-label="Details view"><svg class="w-3 h-3"><use href="#list"/></svg></button>
        <button class="ml-[5px] mr-0.5 flex flex-col gap-px" aria-label="Large icons view"><span class="w-3 h-[11px] border border-black"></span><span class="w-3 h-px bg-black"></span></button>
      </footer>
    </section>

    <div class="absolute right-[5px] bottom-[5px] text-right text-[11px] leading-[15px] text-white">
      Windows 11 IoT Enterprise LTSC Insider Preview<br>
      For testing purposes only. Build 26100.ge_release.240331-1435
    </div>

    <!-- mouse pointer -->
    <svg class="absolute right-[117px] top-[86px] w-5 h-[30px]" viewBox="0 0 20 30"><path d="M1 1v24l5.500-5 4 9 4-1.800-4-8.700h8z" fill="#fff" stroke="#111"/></svg>
  </main>

  <!-- taskbar -->
  <footer class="flex items-center h-12 shrink-0 pl-[21px] pr-5 border-t-2 border-[#dce6e8] bg-[#eee]">
    <button aria-label="Start"><svg class="w-[23px] h-[23px]"><use href="#start"/></svg></button>
    <label class="flex items-center w-[218px] h-[30px] ml-3.5 pl-2.5 rounded-full bg-white border-b border-[#ccc] text-[13px]">
      <svg class="w-4 h-4"><use href="#find"/></svg>
      <input class="w-full ml-2.5 outline-none placeholder:text-[#555]" type="search" placeholder="Search" aria-label="Search">
    </label>
    <button class="flex flex-col items-center gap-1 w-11 ml-[3px] pt-1.5" aria-label="Firefox"><svg class="w-6 h-6"><use href="#fox"/></svg><span class="w-1.5 h-[3px] rounded bg-[#888]"></span></button>
    <button class="flex flex-col items-center gap-1 w-11 pt-1.5" aria-label="Edge"><svg class="w-6 h-6"><use href="#edge"/></svg><span class="w-1.5 h-[3px] rounded bg-[#888]"></span></button>
    <button class="flex flex-col items-center gap-1 w-11 pt-1.5" aria-label="Remote audio"><svg class="w-6 h-6"><use href="#speaker-pc"/></svg><span class="w-1.5 h-[3px] rounded bg-[#888]"></span></button>
    <button class="flex flex-col items-center gap-1 w-11 pt-1.5" aria-label="File Explorer"><svg class="w-6 h-6"><use href="#folder"/></svg><span class="w-1.5 h-[3px] rounded bg-[#888]"></span></button>
    <button class="ml-auto" aria-label="Show hidden icons"><svg class="w-3.5 h-3.5"><use href="#chev-u"/></svg></button>
    <svg class="w-4 h-4 ml-4"><use href="#net"/></svg>
    <svg class="w-[18px] h-4 ml-2"><use href="#sound"/></svg>
    <div class="w-[71px] text-right leading-4 pb-0.5">5:28 AM<br>12/5/2024</div>
    <svg class="w-4 h-4 ml-[7px]"><use href="#bell"/></svg>
  </footer>

  <script>
    const places = [
      ["home", "Home"], ["gallery", "Gallery"], null,
      ["desktop", "Desktop", "pin"], ["down", "Downloads", "pin"], ["docs", "Documents", "pin"],
      ["pics", "Pictures", "pin"], ["music", "Music", "pin"], ["videos", "Videos", "pin"], null,
      ["pc", "This PC", "tree"], ["network", "Network", "tree"],
    ];

    const files = [
      "Today",
      ["android-sm", "android-studio-2024.2.1.12-windows", "12/5/2024 5:27 AM", "Application", "1,193,997 KB"],
      ["pot", "PotPlayerSetup", "12/5/2024 4:25 AM", "Application", "33,935 KB"],
      ["pot", "PotPlayerSetup64", "12/5/2024 4:25 AM", "Application", "37,172 KB"],
      ["vac", "vac470", "12/5/2024 4:04 AM", "Application", "937 KB"],
      ["wolf", "librewolf-132.0.2-1-windows-x86_64-setup", "12/5/2024 3:59 AM", "Application", "140,729 KB"],
      ["reg", "TestRoot", "12/5/2024 1:14 AM", "Registration Entries", "1 KB"],
      "Yesterday",
      ["cert", "penis", "12/4/2024 9:53 PM", "Security Certificate", "3 KB"],
      ["bigscreen", "BigscreenRemoteDesktopSetup", "12/4/2024 9:36 PM", "Application", "89,604 KB"],
      ["steam", "SteamSetup", "12/4/2024 9:30 PM", "Application", "2,325 KB"],
      ["jpg", "pexels-blitzboy-1144176", "12/4/2024 9:28 PM", "JPG File", "357 KB"],
      ["pct", "pct_free_easeus", "12/4/2024 8:07 PM", "Application", "74,011 KB"],
      ["pct", "pct_free_installer_20241204.173337155743", "12/4/2024 8:06 PM", "Application", "1,491 KB"],
    ];

    document.getElementById("places").innerHTML = places.map(function (p) {
      if (!p)
        return '<div class="flex items-center h-8 pl-2 pr-[9px]"><hr class="w-full border-[#cfcfcf]"></div>';

      const bg = p[1] === "Downloads" ? "bg-[#d9d9d9]" : "";
      const arrow = p[2] === "tree" ? '<svg class="w-3 h-3 text-[#666]"><use href="#chev-r"/></svg>' : "";
      const pin = p[2] === "pin" ? '<svg class="w-3 h-3 ml-auto"><use href="#pin"/></svg>' : "";

      return `<a href="#" class="flex items-center h-8 pr-0.5 rounded-sm ${bg}"><span class="flex w-8 pl-2">${arrow}</span><svg class="w-4 h-4 mr-[5px]"><use href="#${p[0]}"/></svg>${p[1]}${pin}</a>`;
    }).join("");

    document.getElementById("files").innerHTML = files.map(function (f, i) {
      if (typeof f === "string")
        return `<tr class="h-[27px] align-top"><th colspan="4" class="p-0 pl-1.5 text-left font-normal text-[14px] leading-[25px] text-[#26417c]"><svg class="inline w-3 h-3 mr-[3px] text-[#777]"><use href="#chev-d"/></svg>${f}</th></tr>`;

      const sel = i === 1 ? "bg-[#cce8ff] border-black text-[#1f3a5a]" : "border-transparent text-[#6d6d6d]";

      return `<tr class="h-7 whitespace-nowrap">
        <td class="p-0 pl-3.5"><div class="flex items-center gap-1 h-6 pl-[3px] border-y border-l ${sel}"><svg class="w-4 h-4 shrink-0"><use href="#${f[0]}"/></svg><span class="text-black">${f[1]}</span></div></td>
        <td class="p-0"><div class="h-6 pl-[7px] leading-[22px] border-y ${sel}">${f[2]}</div></td>
        <td class="p-0"><div class="h-6 pl-[7px] leading-[22px] border-y ${sel}">${f[3]}</div></td>
        <td class="p-0"><div class="h-6 leading-[22px] text-right border-y ${sel}">${f[4]}</div></td>
      </tr>`;
    }).join("");
  </script>
</body>
</html>
